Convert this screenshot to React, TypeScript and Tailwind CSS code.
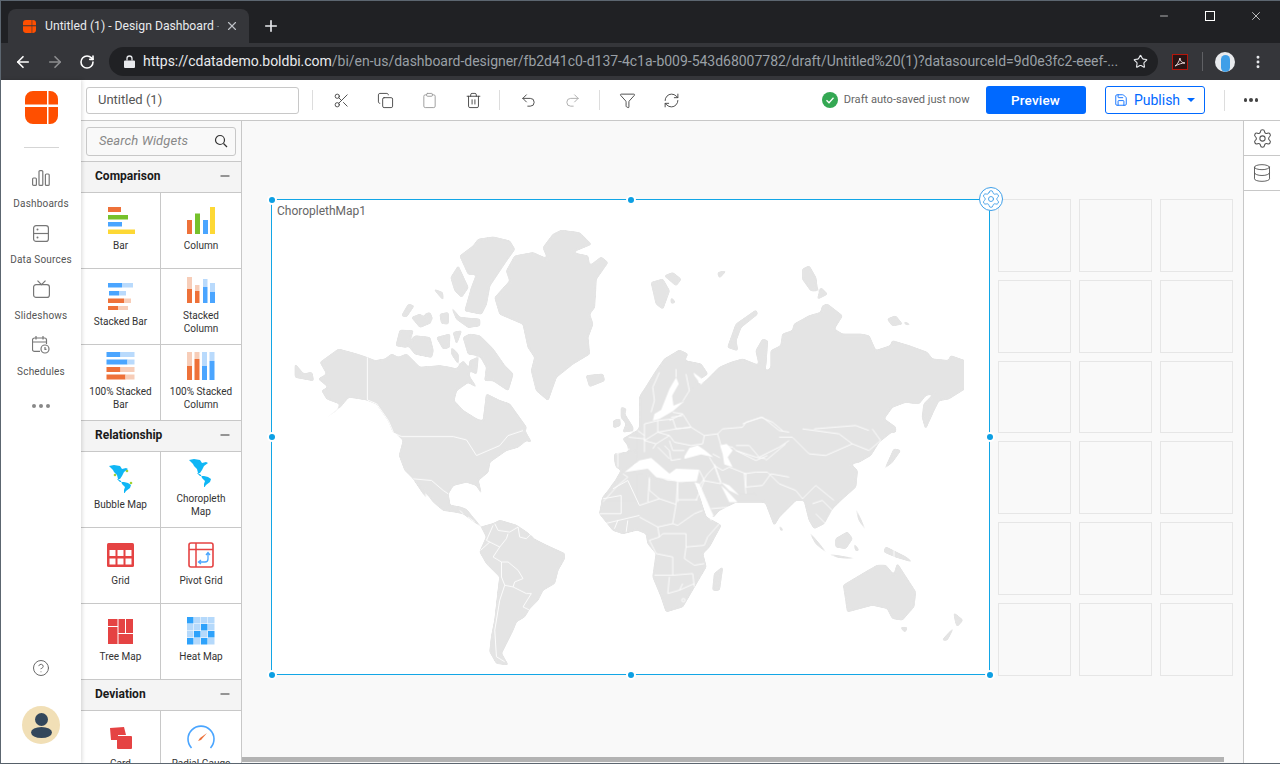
import {
  ArrowLeft,
  ArrowRight,
  CircleHelp,
  Clipboard,
  Copy,
  Database,
  Funnel,
  Minus,
  MoreVertical,
  Plus,
  Redo2,
  RefreshCw,
  RotateCw,
  Save,
  Scissors,
  Settings,
  Star,
  Trash2,
  Undo2,
  X,
} from 'lucide-react';

const ORANGE = '#ee7139';
const GREEN = '#76c12b';
const BLUE = '#4aa5ff';
const YELLOW = '#fdd835';
const PEACH = '#f7cdb8';
const SKY = '#b9dafc';
const RED = '#e54343';

const LOGO_PATH =
  'M8 0h14v13.500H0V8a8 8 0 0 1 8-8zM23.500 0H25a8 8 0 0 1 8 8v5.500H23.500zM0 16h22v17H8a8 8 0 0 1-8-8zM23.500 16H33v9a8 8 0 0 1-8 8h-1.500z';

function Logo({ size }: { size: number }) {
  return (
    <svg width={size} height={size} viewBox="0 0 33 33" className="shrink-0">
      <path d={LOGO_PATH} fill="#ff4f00" />
    </svg>
  );
}

function BarIcon() {
  return (
    <svg width="28" height="28" viewBox="0 0 28 28">
      <rect x="1" y="1" width="13" height="5" fill={ORANGE} />
      <rect x="1" y="9" width="20" height="4.500" fill={GREEN} />
      <rect x="1" y="16" width="14" height="4.500" fill={BLUE} />
      <rect x="1" y="23.500" width="27" height="4.500" fill={YELLOW} />
    </svg>
  );
}

function ColumnIcon() {
  return (
    <svg width="28" height="28" viewBox="0 0 28 28">
      <rect x="0" y="14" width="5" height="14" fill={ORANGE} />
      <rect x="8" y="7.500" width="5" height="20.500" fill={GREEN} />
      <rect x="16" y="14" width="5" height="14" fill={BLUE} />
      <rect x="23" y="1" width="5" height="27" fill={YELLOW} />
    </svg>
  );
}

function StackedBarIcon() {
  return (
    <svg width="26" height="28" viewBox="0 0 26 28">
      <rect x="0" y="1" width="14" height="4.500" fill={BLUE} />
      <rect x="14" y="1" width="11" height="4.500" fill={SKY} />
      <rect x="1" y="9" width="10" height="4.500" fill={BLUE} />
      <rect x="11" y="9" width="7" height="4.500" fill={SKY} />
      <rect x="0" y="16.500" width="16" height="4.500" fill={ORANGE} />
      <rect x="16" y="16.500" width="7" height="4.500" fill={PEACH} />
      <rect x="0" y="24" width="10" height="4.500" fill={ORANGE} />
      <rect x="10" y="24" width="10" height="4.500" fill={PEACH} />
    </svg>
  );
}

function StackedColumnIcon() {
  return (
    <svg width="28" height="26" viewBox="0 0 28 26">
      <rect x="0" y="0" width="5" height="12" fill={PEACH} />
      <rect x="0" y="12" width="5" height="14" fill={ORANGE} />
      <rect x="8" y="8" width="4.500" height="6" fill={PEACH} />
      <rect x="8" y="14" width="4.500" height="12" fill={ORANGE} />
      <rect x="16" y="2" width="4.500" height="8" fill={SKY} />
      <rect x="16" y="10" width="4.500" height="16" fill={BLUE} />
      <rect x="23" y="6" width="5" height="9" fill={SKY} />
      <rect x="23" y="15" width="5" height="11" fill={BLUE} />
    </svg>
  );
}

function FullBarIcon() {
  return (
    <svg width="29" height="28" viewBox="0 0 29 28">
      <rect x="0.500" y="0" width="14" height="5" fill={BLUE} />
      <rect x="14.500" y="0" width="14" height="5" fill={SKY} />
      <rect x="0.500" y="7.500" width="21" height="5" fill={BLUE} />
      <rect x="21.500" y="7.500" width="7" height="5" fill={SKY} />
      <rect x="0.500" y="15" width="14" height="5" fill={ORANGE} />
      <rect x="14.500" y="15" width="14" height="5" fill={PEACH} />
      <rect x="0.500" y="22.500" width="19" height="5" fill={ORANGE} />
      <rect x="19.500" y="22.500" width="9" height="5" fill={PEACH} />
    </svg>
  );
}

function FullColumnIcon() {
  return (
    <svg width="28" height="28" viewBox="0 0 28 28">
      <rect x="0" y="0" width="5" height="14" fill={PEACH} />
      <rect x="0" y="14" width="5" height="14" fill={ORANGE} />
      <rect x="7.500" y="0" width="5" height="7" fill={PEACH} />
      <rect x="7.500" y="7" width="5" height="21" fill={ORANGE} />
      <rect x="15" y="0" width="5" height="14" fill={SKY} />
      <rect x="15" y="14" width="5" height="14" fill={BLUE} />
      <rect x="22.500" y="0" width="5" height="9" fill={SKY} />
      <rect x="22.500" y="9" width="5" height="19" fill={BLUE} />
    </svg>
  );
}

// small americas silhouette used by both map widgets
function AmericasIcon({ dots }: { dots?: boolean }) {
  return (
    <svg width="24" height="28" viewBox="0 0 24 28">
      <path
        d="M0 1l5-1 6 1 2 3 4-1 2 1-4 3-2 4-2 3-3 0 3 3 4 0 4 1 3 2-1 3-4 3-2 3 0-4 1-3-3-3-1-3-3-2-1-4-3-3-1-2z"
        fill="#0fb6f5"
      />
      {dots && (
        <>
          <circle cx="18" cy="6" r="1.300" fill="#a4d233" />
          <circle cx="6" cy="10" r="1.300" fill="#a4d233" />
          <circle cx="22" cy="18" r="1.300" fill="#a4d233" />
        </>
      )}
    </svg>
  );
}

function GridIcon() {
  return (
    <svg width="27" height="24" viewBox="0 0 27 24">
      <rect width="27" height="24" rx="1.500" fill={RED} />
      {[2.500, 10.500, 18.500].map((x) =>
        [7, 15.500].map((y) => <rect key={`${x}-${y}`} x={x} y={y} width="6" height="6" fill="#fff" />)
      )}
    </svg>
  );
}

function PivotIcon() {
  return (
    <svg width="26" height="26" viewBox="0 0 26 26" fill="none">
      <rect x="1" y="1" width="24" height="24" rx="2" stroke={RED} strokeWidth="1.600" />
      <path d="M1 7.500h24M8 1v24" stroke={RED} strokeWidth="1.500" />
      <path d="M20 11v6a3 3 0 0 1-3 3h-6M18 13l2-2.500 2 2.500M13 18l-2.500 2 2.500 2" stroke={BLUE} strokeWidth="1.300" />
    </svg>
  );
}

function TreeMapIcon() {
  return (
    <svg width="25" height="25" viewBox="0 0 25 25">
      <rect x="0" y="0" width="9.500" height="7" fill={RED} />
      <rect x="0" y="8" width="9.500" height="17" fill={RED} />
      <rect x="10.500" y="0" width="6.500" height="14" fill={RED} />
      <rect x="18" y="0" width="7" height="14" fill={RED} />
      <rect x="10.500" y="15" width="14.500" height="10" fill={RED} />
    </svg>
  );
}

function HeatMapIcon() {
  const dark = ['0-0', '1-2', '2-1', '2-3', '3-0', '3-2'];
  const cells = [];
  for (let r = 0; r < 4; r++) {
    for (let c = 0; c < 4; c++) {
      cells.push(
        <rect
          key={`${r}-${c}`}
          x={c * 7}
          y={r * 7}
          width="6.500"
          height="6.500"
          fill={dark.includes(`${r}-${c}`) ? '#2ea2fb' : '#b5d9fb'}
        />
      );
    }
  }
  return (
    <svg width="28" height="28" viewBox="0 0 28 28">
      {cells}
    </svg>
  );
}

function CardIcon() {
  return (
    <svg width="22" height="22" viewBox="0 0 22 22">
      <path d="M0 1l14-1 2 8h-8v5H1z" fill={RED} />
      <rect x="7" y="9" width="15" height="13" rx="1" fill={RED} />
    </svg>
  );
}

function GaugeIcon() {
  return (
    <svg width="28" height="28" viewBox="0 0 28 28" fill="none">
      <path d="M4.500 24A13 13 0 1 1 23.500 24" stroke={BLUE} strokeWidth="1.600" />
      <path d="M20 9l-7 5-2 3 3-1z" fill={ORANGE} />
    </svg>
  );
}

function Cell({ label, children }: { label: string; children: React.ReactNode }) {
  return (
    <div className="flex h-[75px] flex-col items-center overflow-hidden bg-white px-1 text-center">
      <div className="flex h-[46px] shrink-0 items-center justify-center pt-2">{children}</div>
      <span className="text-[10px] leading-[13px] text-[#333]">{label}</span>
    </div>
  );
}

function TwoLineCell({ label, children }: { label: string; children: React.ReactNode }) {
  return (
    <div className="flex h-[75px] flex-col items-center overflow-hidden bg-white px-1 pt-[2px] text-center">
      <div className="flex h-[38px] shrink-0 items-center justify-center">{children}</div>
      <span className="whitespace-pre-line text-[10px] leading-[13px] text-[#333]">{label}</span>
    </div>
  );
}

function SectionHeader({ title }: { title: string }) {
  return (
    <div className="flex h-[31px] items-center justify-between border-b border-[#c8c8c8] bg-[#f4f4f4] pb-[2px] pl-[14px] pr-[9px]">
      <span className="text-xs font-bold text-[#1a1a1a]">{title}</span>
      <Minus size={14} strokeWidth={1.700} className="text-[#333]" />
    </div>
  );
}

function WidgetGrid({ children }: { children: React.ReactNode }) {
  return <div className="grid grid-cols-[79px_80px] gap-px bg-[#c8c8c8] pb-px">{children}</div>;
}

function NavItem({ label, children }: { label: string; children: React.ReactNode }) {
  return (
    <div className="flex h-14 flex-col items-center">
      <div className="flex h-[30px] items-end justify-center">{children}</div>
      <span className="mt-3 text-[10px] leading-3 tracking-[0.2px] text-[#555]">{label}</span>
    </div>
  );
}

function ToolDivider() {
  return <div className="h-5 w-px bg-[#ddd]" />;
}

function ToolBtn({ children }: { children: React.ReactNode }) {
  return <div className="flex w-11 items-center justify-center">{children}</div>;
}

function Handle({ className }: { className: string }) {
  return <div className={`absolute size-[6px] rounded-full bg-[#0d9fe3] ring-2 ring-white ${className}`} />;
}

function WorldMap() {
  const land = '#e4e4e4';
  return (
    <svg className="block h-full w-full" viewBox="272 199 718 475">
      <defs>
        {/* rounds the hand-traced coastlines so they read less like polygons */}
        <filter id="coast" x="0" y="0" width="100%" height="100%" colorInterpolationFilters="sRGB">
          <feGaussianBlur stdDeviation="0.900" />
          <feComponentTransfer>
            <feFuncA type="linear" slope="5" intercept="-1.800" />
          </feComponentTransfer>
        </filter>
      </defs>
      <g fill={land} stroke={land} strokeWidth="3" strokeLinejoin="round" filter="url(#coast)">
        {/* north america + greenland, coords read off the 3x crop */}
        <g transform="translate(260 190) scale(0.3333)">
          <path d="M850 170L880 130L905 118L960 125L995 160L935 185L985 195L990 225L1025 198L1045 215L1010 265L1005 350L990 370L1000 400L985 440L990 490L940 520L890 560L865 630L830 600L815 540L825 500L805 470L790 400L720 370L705 320L750 270L740 240L765 195L820 185L865 205z" />
          <path d="M600 195L640 165L655 145L700 138L750 150L765 175L740 210L690 285L680 340L665 370L615 360L635 290L650 250L625 250z" />
          <path d="M573 260L595 225L625 290L605 320L585 300z" />
          <path d="M425 375L445 340L462 345L440 378z" />
          <path d="M455 380L480 370L515 395L480 410z" />
          <path d="M522 295L548 305L550 328z" />
          <path d="M495 370L510 365L518 385L500 395z" />
          <path d="M540 370L565 365L565 400L545 398z" />
          <path d="M575 350L600 380L660 385L660 405L625 410L590 385z" />
          <path d="M408 465L420 418L460 420L440 470z" />
          <path d="M445 465L465 435L510 440L520 480L515 500L465 490z" />
          <path d="M530 440L570 430L568 470L550 475z" />
          <path d="M580 425L605 420L590 460z" />
          <path d="M610 440L630 430L660 435L700 475L735 525L760 550L745 600L700 570L675 570L680 530L660 495L625 490z" />
          <path d="M575 470L595 490L595 520L575 490z" />
          <path d="M630 510L655 500L650 550L630 540z" />
          <path d="M980 555L1030 550L1035 570L990 588z" />
          <path d="M105 520L130 550L155 545L160 570L105 560z" />
          <path d="M180 515L235 475L290 490L320 500L345 510L375 505L395 490L415 500L440 490L470 520L480 530L540 525L570 530L590 535L610 510L625 530L630 560L650 590L625 575L590 600L582 630L610 660L650 685L670 692L680 610L720 630L750 640L800 710L795 725L400 725L385 690L350 640L320 628L285 622L265 620L240 650L190 688L230 660L240 640L200 625L185 600L205 590L175 565L200 550z" />
        </g>
        <g transform="translate(260 430) scale(0.3333)">
          <path d="M395 -5L430 30L418 75L435 120L460 145L500 205L480 160L520 215L550 240L585 245L610 250L630 265L665 290L640 262L620 237L600 230L570 225L565 190L580 165L620 155L650 165L665 190L655 150L685 125L690 95L740 60L775 50L800 30L815 35L795 0L790 -5z" />
          <path d="M665 290L700 280L720 270L770 285L800 305L830 330L860 345L915 370L915 385L895 420L885 460L850 480L835 510L810 535L795 560L770 575L760 600L740 640L725 670L745 705L710 700L690 665L695 620L705 570L715 480L720 440L680 400L660 365L680 320z" />
          <path d="M1140 110L1085 120L1060 165L1030 200L1020 250L1060 300L1090 310L1150 295z" />
        </g>
        {/* europe and central asia */}
        <g transform="translate(590 370) scale(0.3333)">
          <path d="M155 70L210 0L260 -10L290 10L300 60L280 85L250 85L265 40L262 20L240 50L225 85L225 110L205 140L185 125L175 120L155 100z" />
          <path d="M100 205L145 180L170 155L205 150L250 120L285 100L295 60L310 40L340 40L400 0L600 0L600 395L420 395L395 350L385 340L370 290L335 295L330 300L275 295L250 290L240 265L200 235L165 245L118 245L115 225z" />
          <path d="M75 250L118 245L165 250L150 265L130 285L105 305L80 290L75 270z" />
          <path d="M165 245L185 235L205 260L235 285L225 295L190 260L165 255z" />
          <path d="M215 300L230 300L225 310z" />
          <path d="M95 110L110 115L105 130L130 170L130 180L100 185L110 160L95 140z" />
          <path d="M72 150L90 145L92 165L72 172z" />
          <path d="M35 395L70 340L100 310L170 305L180 320L240 335L290 345L315 340L335 395z" />
        </g>
        {/* arctic russia */}
        <g transform="translate(640 190) scale(0.3333)">
          <path d="M0 620L50 540L75 505L120 478L145 490L135 510L185 520L205 550L175 570L170 590L150 600L200 570L225 545L240 530L275 515L310 505L360 525L350 480L370 445L385 450L380 520L375 550L395 530L395 480L425 465L430 430L460 420L465 400L510 375L545 365L550 345L565 340L610 375L585 415L610 430L665 430L690 435L710 480L755 465L760 450L810 465L865 485L880 505L930 510L935 495L978 510L978 595L930 625L900 630L885 660L860 715L850 680L855 640L890 605L860 615L840 640L800 635L760 650L735 685L770 710L770 725L0 725z" />
          <path d="M510 225L530 260L535 300L515 300L490 265L490 235z" />
          <path d="M545 290L565 310L535 325z" />
          <path d="M745 385L770 375L790 400L760 405z" />
          <path d="M795 392L815 402L800 402z" />
          <path d="M35 275L70 265L90 300L70 355L50 340z" />
          <path d="M75 255L100 245L125 265L110 285z" />
          <path d="M95 320L108 335L95 338z" />
          <path d="M235 245L260 240L240 262z" />
          <path d="M290 400L350 358L355 370L305 410L290 450L295 480L265 470z" />
        </g>
        {/* south asia, africa, oceania */}
        <g transform="translate(640 430) scale(0.3333)">
          <path d="M-5 -5L770 -5L720 35L695 75L660 95L635 100L655 120L650 170L605 210L580 235L555 280L525 295L510 270L495 210L470 210L420 260L405 285L380 220L345 190L325 190L300 190L305 200L290 215L240 240L220 262L180 160L-5 130z" />
          <path d="M-5 130L30 140L80 155L165 155L200 260L245 285L210 350L190 370L200 410L165 470L130 530L80 545L65 500L40 440L50 370L25 340L20 310L-5 300z" />
          <path d="M250 410L240 480L220 480L225 430z" />
          <path d="M613 465L680 425L715 405L740 405L765 435L775 400L830 485L825 530L790 570L760 565L745 535L700 525L625 545L620 510z" />
          <path d="M785 592L805 592L798 607z" />
          <path d="M945 548L972 570L955 590L950 575z" />
          <path d="M945 592L925 630L910 630z" />
          <path d="M510 305L565 370L530 340z" />
          <path d="M590 325L625 305L640 325L620 355L590 350z" />
          <path d="M740 350L800 380L820 395L770 380L735 365z" />
          <path d="M570 372L650 385L600 382z" />
          <path d="M420 285L432 300L425 302z" />
          <path d="M650 235L680 300L660 270z" />
          <path d="M645 340L660 360L650 362z" />
          <path d="M705 140L760 95L785 60L765 55L740 110z" />
        </g>
      </g>
      {/* seas cut back out of the land */}
      <g fill="#fff">
        <g transform="translate(590 370) scale(0.3333)">
          <path d="M240 55L260 20L268 40L248 75L252 105L285 92L250 122L210 145L190 150L195 130L215 118z" />
          <path d="M285 258L300 232L325 225L345 238L372 260L335 252L285 265z" />
          <path d="M392 225L412 220L430 240L415 260L430 290L405 282L400 250z" />
          <path d="M105 305L150 270L185 262L240 310L260 295L330 298L322 332L270 335L200 320L175 295z" />
          <path d="M312 5L345 30L335 42L315 15z" />
          <path d="M395 345L412 360L445 395L420 395z" />
        </g>
        <g transform="translate(640 430) scale(0.3333)">
          <path d="M165 155L180 160L222 255L215 272z" />
          <path d="M245 155L270 165L300 195L270 180z" />
        </g>
      </g>
      {/* country borders, stroke is in crop units (about 1px on screen) */}
      <g fill="none" stroke="#fff" strokeWidth="2.700" strokeLinejoin="round">
        <g transform="translate(260 190) scale(0.3333)">
          <path d="M322 500L322 628L350 640L385 690L400 725" />
        </g>
        <g transform="translate(260 430) scale(0.3333)">
          <path d="M395 5L425 18L580 18L620 28L650 75L720 45L745 15L790 0" />
          <path d="M460 145L515 150L550 180L565 190" />
          <path d="M600 240L610 250M625 260L645 275" />
          <path d="M705 280L715 300L750 305L775 290L780 320L800 325L815 310L825 325" />
          <path d="M700 285L680 330L720 350L740 325L745 310M662 360L690 335" />
          <path d="M720 350L700 380L725 395L745 395L775 420L790 445L765 455L760 470L800 490L815 490L790 530L810 540" />
          <path d="M725 395L725 440L735 465L760 470M735 465L720 510L705 600L710 680L735 695" />
          <path d="M1060 175L1105 150L1140 225M1030 205L1085 195L1085 250L1020 250M1035 280L1140 255M1065 295L1075 270M1100 305L1105 270" />
        </g>
        <g transform="translate(590 370) scale(0.3333)">
          <path d="M210 5L190 50L195 90L185 125" />
          <path d="M260 -5L260 20M290 10L300 60L280 92" />
          <path d="M250 125L280 130M245 140L280 135" />
          <path d="M240 150L280 130L305 170L260 175" />
          <path d="M205 150L250 145L260 175L205 185L205 150" />
          <path d="M165 160L205 150M205 185L165 210L165 160M145 180L165 195" />
          <path d="M118 200L165 205L165 245" />
          <path d="M260 175L305 170L345 195L340 220L305 225L255 215L240 195L205 185" />
          <path d="M165 210L200 220L240 195M200 220L190 235M205 230L240 265M240 210L250 240L285 240M225 225L240 240L245 270L275 265" />
          <path d="M345 195L385 190L400 175L460 170L470 155L520 140L570 180L600 185" />
          <path d="M385 190L395 225L430 230L440 240L500 260L530 265" />
          <path d="M360 260L375 285L400 300L420 290L470 310L470 350L520 345L545 310L600 320" />
          <path d="M440 225L480 225L510 260L570 230L600 210" />
          <path d="M340 330L395 340L375 285M330 300L345 330L320 390" />
          <path d="M265 335L265 395M180 320L175 395M100 310L115 320L85 345L40 395" />
          <path d="M120 235L80 250M85 250L85 290" />
          <path d="M370 250L392 262" />
        </g>
        <g transform="translate(640 190) scale(0.3333)">
          <path d="M310 700L365 680L400 695L430 720M525 715L650 705L690 720" />
        </g>
        <g transform="translate(640 430) scale(0.3333)">
          <path d="M30 145L30 180L60 205L0 225M60 205L110 222L115 150M115 208L175 208" />
          <path d="M110 222L100 280L55 290L0 260M100 280L115 285L165 250L190 240" />
          <path d="M55 290L60 320L30 330L50 370M60 320L70 310L140 310L140 350L195 345L205 320L240 280" />
          <path d="M140 350L135 385L165 405L195 400M50 370L100 380L100 435L45 435M100 435L160 430L165 470" />
          <path d="M90 440L85 490L120 480L130 460M120 480L165 460" />
          <path d="M225 100L245 155M180 165L205 130L225 110M215 235L270 230" />
          <path d="M320 190L315 130L350 125L385 125L420 160L470 180L490 205L530 165L585 210" />
          <path d="M420 20L460 20L510 70L560 75L640 40L600 10L490 -5M640 40L690 60L725 30L700 -5" />
          <path d="M380 90L440 40M290 60L350 90L385 75" />
          <path d="M520 220L550 210L580 240L560 280L530 250" />
          <path d="M765 355L765 385" />
          <circle cx="132" cy="510" r="5" />
        </g>
      </g>
    </svg>
  );
}

function EmptyTiles() {
  const tiles = Array.from({ length: 18 });
  return (
    <div className="grid grid-cols-[73px_73px_73px] auto-rows-[72.800px] gap-2">
      {tiles.map((_, i) => (
        <div key={i} className="border border-[#e6e6e6]" />
      ))}
    </div>
  );
}

export default function App() {
  return (
    <div className="relative flex h-[764px] w-[1280px] flex-col overflow-hidden border-t border-l border-[#5c6670] bg-white font-['Roboto',sans-serif]">
      {/* browser title bar */}
      <div className="flex h-[42px] shrink-0 items-end bg-[#202124]">
        <div className="ml-[7px] flex h-[34px] w-[241px] items-center rounded-t-lg bg-[#35363a] pl-[15px] pr-[10px]">
          <Logo size={13} />
          <span className="ml-[9px] flex-1 overflow-hidden whitespace-nowrap text-[12.200px] text-[#e8eaed]">
            Untitled (1) - Design Dashboard <span className="text-[#77797c]">-</span>
          </span>
          <X size={14} strokeWidth={2} className="ml-[6px] shrink-0 text-[#bdc1c6]" />
        </div>
        <Plus size={18} strokeWidth={2.200} className="mb-[8px] ml-[13px] text-[#e8eaed]" />
        <div className="mb-5 ml-auto flex items-center pr-[17px] text-white">
          <Minus size={12} strokeWidth={1.300} />
          <div className="ml-[35px] size-[10px] border border-white" />
          <X size={14} strokeWidth={1.200} className="ml-[34px]" />
        </div>
      </div>

      {/* browser toolbar */}
      <div className="flex h-[37px] shrink-0 items-center bg-[#35363a] pl-[13px]">
        <ArrowLeft size={18} strokeWidth={2.200} className="text-white" />
        <ArrowRight size={18} strokeWidth={2.200} className="ml-[14px] text-[#8d8e90]" />
        <RotateCw size={16} strokeWidth={2.400} className="ml-[15px] text-white" />
        <div className="ml-[14px] flex h-[29px] w-[1049px] shrink-0 items-center rounded-full bg-[#202124] pl-[15px] pr-[10px]">
          <svg width="11" height="13" viewBox="0 0 11 13" className="shrink-0" fill="#e8eaed">
            <path d="M1 5.500h9a1 1 0 0 1 1 1V12a1 1 0 0 1-1 1H1a1 1 0 0 1-1-1V6.500a1 1 0 0 1 1-1z" />
            <path d="M3 5.500V3.500a2.500 2.500 0 0 1 5 0v2" fill="none" stroke="#e8eaed" strokeWidth="1.300" />
          </svg>
          <span className="ml-[8px] flex-1 whitespace-nowrap text-[14px] tracking-[-0.02px] text-[#9aa0a6]">
            <span className="text-[#e8eaed]">https://cdatademo.boldbi.com</span>
            /bi/en-us/dashboard-designer/fb2d41c0-d137-4c1a-b009-543d68007782/draft/Untitled%20(1)?datasourceId=9d0e3fc2-eeef-...
          </span>
          <Star size={15} strokeWidth={1.800} className="shrink-0 text-[#e8eaed]" />
        </div>
        <svg width="16" height="16" viewBox="0 0 16 16" className="ml-[14px] shrink-0">
          <rect x="0.500" y="0.500" width="15" height="15" fill="#2a1515" stroke="#b5160c" />
          <path d="M3 12c2-1 4-4 5-8 0 3 2 5 5 5-3 0-6 1-10 3z" fill="none" stroke="#e8d8d8" strokeWidth="1" />
        </svg>
        <div className="ml-[14px] h-[19px] w-px shrink-0 bg-[#5f6064]" />
        <div className="ml-3 flex size-[20px] shrink-0 items-center justify-center overflow-hidden rounded-full bg-[#e8eaed]">
          <div className="mt-[3px] h-[17px] w-[9px] rounded-full bg-[#3f9fe8]" />
        </div>
        <MoreVertical size={16} strokeWidth={2.400} className="ml-[15px] shrink-0 text-[#e8eaed]" />
      </div>

      {/* app */}
      <div className="flex min-h-0 flex-1">
        {/* left nav */}
        <div className="z-10 flex w-[80px] shrink-0 flex-col items-center bg-white shadow-[1px_0_4px_rgba(0,0,0,0.15)]">
          <div className="mt-[11px]">
            <Logo size={33} />
          </div>
          <div className="mt-[23px] h-px w-[35px] bg-[#d5d5d5]" />
          <div className="mt-2 flex flex-col">
            <NavItem label="Dashboards">
              <svg width="18" height="16" viewBox="0 0 18 16" fill="none" stroke="#777" strokeWidth="1.200">
                <rect x="0.600" y="8" width="3.800" height="7.400" rx="1" />
                <rect x="7" y="0.600" width="3.800" height="14.800" rx="1" />
                <rect x="13.400" y="4" width="3.800" height="11.400" rx="1" />
              </svg>
            </NavItem>
            <NavItem label="Data Sources">
              <svg width="16" height="17" viewBox="0 0 16 17" fill="none" stroke="#777" strokeWidth="1.200">
                <rect x="0.600" y="0.600" width="14.800" height="15.800" rx="2.500" />
                <path d="M0.600 8.500h14.800" />
                <circle cx="4.500" cy="4.500" r="1" fill="#777" stroke="none" />
                <circle cx="4.500" cy="12.500" r="1" fill="#777" stroke="none" />
              </svg>
            </NavItem>
            <NavItem label="Slideshows">
              <svg width="17" height="18" viewBox="0 0 17 18" fill="none" stroke="#777" strokeWidth="1.200">
                <rect x="0.600" y="4.600" width="15.800" height="12.800" rx="2.500" />
                <path d="M4.500 0.600l4 4 4-4" />
              </svg>
            </NavItem>
            <NavItem label="Schedules">
              <svg width="18" height="18" viewBox="0 0 18 18" fill="none" stroke="#777" strokeWidth="1.200">
                <path d="M8 15.400H2.500a2 2 0 0 1-2-2V4a2 2 0 0 1 2-2h10a2 2 0 0 1 2 2v4" />
                <path d="M4 0v3.500M11 0v3.500M0.600 6h13.800" />
                <circle cx="13" cy="13" r="4" />
                <path d="M13 11v2.300h1.500" />
              </svg>
            </NavItem>
          </div>
          <div className="mt-6 flex gap-[3px]">
            <span className="size-[4px] rounded-full bg-[#888]" />
            <span className="size-[4px] rounded-full bg-[#888]" />
            <span className="size-[4px] rounded-full bg-[#888]" />
          </div>
          <CircleHelp size={18} strokeWidth={1.300} className="mt-auto text-[#666]" />
          <div className="mb-[19px] mt-[29px] flex size-[38px] flex-col items-center justify-center rounded-full bg-[#f1dfb6]">
            <div className="size-[13px] rounded-full bg-[#33475b]" />
            <div className="mt-[1px] h-[11px] w-[21px] rounded-[50%] bg-[#33475b]" />
          </div>
        </div>

        <div className="flex min-w-0 flex-1 flex-col">
          {/* designer toolbar */}
          <div className="flex h-[41px] shrink-0 items-center border-b border-[#c8c8c8] bg-white pl-[5px]">
            <div className="flex h-[27px] w-[213px] items-center rounded-[3px] border border-[#c8c8c8] pl-[11px] text-[13px] text-[#555]">
              Untitled (1)
            </div>
            <div className="ml-[13px]">
              <ToolDivider />
            </div>
            <div className="ml-[6px] mr-[4px] flex text-[#444]">
              <ToolBtn><Scissors size={17} strokeWidth={1.300} /></ToolBtn>
              <ToolBtn><Copy size={17} strokeWidth={1.300} /></ToolBtn>
              <ToolBtn><Clipboard size={17} strokeWidth={1.300} className="text-[#999]" /></ToolBtn>
              <ToolBtn><Trash2 size={17} strokeWidth={1.300} /></ToolBtn>
            </div>
            <ToolDivider />
            <div className="ml-[6px] mr-[5px] flex text-[#444]">
              <ToolBtn><Undo2 size={17} strokeWidth={1.300} /></ToolBtn>
              <ToolBtn><Redo2 size={17} strokeWidth={1.300} className="text-[#aaa]" /></ToolBtn>
            </div>
            <ToolDivider />
            <div className="ml-[5px] flex text-[#444]">
              <ToolBtn><Funnel size={17} strokeWidth={1.300} /></ToolBtn>
              <ToolBtn><RefreshCw size={17} strokeWidth={1.300} /></ToolBtn>
            </div>
            <div className="ml-auto flex items-center">
              <svg width="16" height="16" viewBox="0 0 16 16">
                <circle cx="8" cy="8" r="8" fill="#34a853" />
                <path d="M4.500 8.200l2.500 2.500 4.500-5" fill="none" stroke="#fff" strokeWidth="1.300" />
              </svg>
              <span className="ml-[6px] text-[11.100px] text-[#666]">Draft auto-saved just now</span>
              <div className="ml-4 flex h-7 w-[100px] items-center justify-center rounded-[3px] bg-[#0069ff] text-[13.500px] font-medium tracking-[0.2px] text-white">
                Preview
              </div>
              <div className="ml-[19px] flex h-7 w-[100px] items-center justify-center rounded-[3px] border border-[#0069ff] text-[14px] text-[#0069ff]">
                <Save size={14} strokeWidth={1.500} className="mr-[6px]" />
                Publish
                <svg width="8" height="4" viewBox="0 0 8 4" className="ml-[7px]" fill="#0069ff">
                  <path d="M0 0h8L4 4z" />
                </svg>
              </div>
              <div className="ml-[19px] h-[21px] w-px bg-[#ddd]" />
              <div className="ml-[19px] mr-[22px] flex gap-[2px]">
                <span className="size-[3.500px] rounded-full bg-[#444]" />
                <span className="size-[3.500px] rounded-full bg-[#444]" />
                <span className="size-[3.500px] rounded-full bg-[#444]" />
              </div>
            </div>
          </div>

          <div className="flex min-h-0 flex-1">
            {/* widget panel */}
            <div className="w-[161px] shrink-0 overflow-hidden border-r border-[#c8c8c8] bg-white">
              <div className="flex h-[41px] items-center justify-center border-b border-[#c8c8c8] bg-[#f9f9f9]">
                <div className="flex h-[29px] w-[150px] items-center justify-between rounded-[3px] border border-[#c8c8c8] pl-3 pr-[7px]">
                  <span className="text-[13px] italic tracking-[0.1px] text-[#888]">Search Widgets</span>
                  <svg width="14" height="14" viewBox="0 0 14 14" fill="none" stroke="#333" strokeWidth="1.200">
                    <circle cx="6" cy="6" r="4.500" />
                    <path d="M9.500 9.500L13 13" />
                  </svg>
                </div>
              </div>
              <SectionHeader title="Comparison" />
              <WidgetGrid>
                <Cell label="Bar"><BarIcon /></Cell>
                <Cell label="Column"><ColumnIcon /></Cell>
                <Cell label="Stacked Bar"><StackedBarIcon /></Cell>
                <TwoLineCell label={'Stacked\nColumn'}><StackedColumnIcon /></TwoLineCell>
                <TwoLineCell label={'100% Stacked\nBar'}><FullBarIcon /></TwoLineCell>
                <TwoLineCell label={'100% Stacked\nColumn'}><FullColumnIcon /></TwoLineCell>
              </WidgetGrid>
              <SectionHeader title="Relationship" />
              <WidgetGrid>
                <Cell label="Bubble Map"><AmericasIcon dots /></Cell>
                <TwoLineCell label={'Choropleth\nMap'}><AmericasIcon /></TwoLineCell>
                <Cell label="Grid"><GridIcon /></Cell>
                <Cell label="Pivot Grid"><PivotIcon /></Cell>
                <Cell label="Tree Map"><TreeMapIcon /></Cell>
                <Cell label="Heat Map"><HeatMapIcon /></Cell>
              </WidgetGrid>
              <SectionHeader title="Deviation" />
              <WidgetGrid>
                <Cell label="Card"><CardIcon /></Cell>
                <Cell label="Radial Gauge"><GaugeIcon /></Cell>
              </WidgetGrid>
            </div>

            {/* canvas */}
            <div className="relative flex min-w-0 flex-1 gap-2 bg-[#f9f9f9] pl-[29px] pt-[78px]">
              <div className="relative h-[476px] w-[719px] shrink-0 border border-[#12a6e6] bg-white">
                <WorldMap />
                <span className="absolute left-[5px] top-[3px] text-xs text-[#666]">ChoroplethMap1</span>
                <Handle className="-left-[3.500px] -top-[3.500px]" />
                <Handle className="left-[356px] -top-[3.500px]" />
                <Handle className="-left-[3.500px] top-[234px]" />
                <Handle className="-right-[3.500px] top-[234px]" />
                <Handle className="-left-[3.500px] -bottom-[3.500px]" />
                <Handle className="left-[356px] -bottom-[3.500px]" />
                <Handle className="-right-[3.500px] -bottom-[3.500px]" />
                <div className="absolute -right-[14px] -top-[13px] flex size-6 items-center justify-center rounded-full border border-[#3f9fe8] bg-white">
                  <Settings size={20} strokeWidth={1.100} className="text-[#3f9fe8]" />
                </div>
              </div>
              <EmptyTiles />
              <div className="absolute bottom-[1px] left-0 h-[5px] w-[982px] bg-[#b3b3b3]" />
            </div>

            {/* right rail */}
            <div className="flex w-[37px] shrink-0 flex-col border-l border-[#c8c8c8] bg-white">
              <div className="flex h-[35px] items-center justify-center border-b border-[#c8c8c8]">
                <Settings size={21} strokeWidth={1.200} className="text-[#555]" />
              </div>
              <div className="flex h-[35px] items-center justify-center border-b border-[#c8c8c8]">
                <Database size={20} strokeWidth={1.100} className="text-[#555]" />
              </div>
            </div>
          </div>
        </div>
      </div>
      <div className="h-px w-full shrink-0 bg-[#5c6670]" />
    </div>
  );
}
